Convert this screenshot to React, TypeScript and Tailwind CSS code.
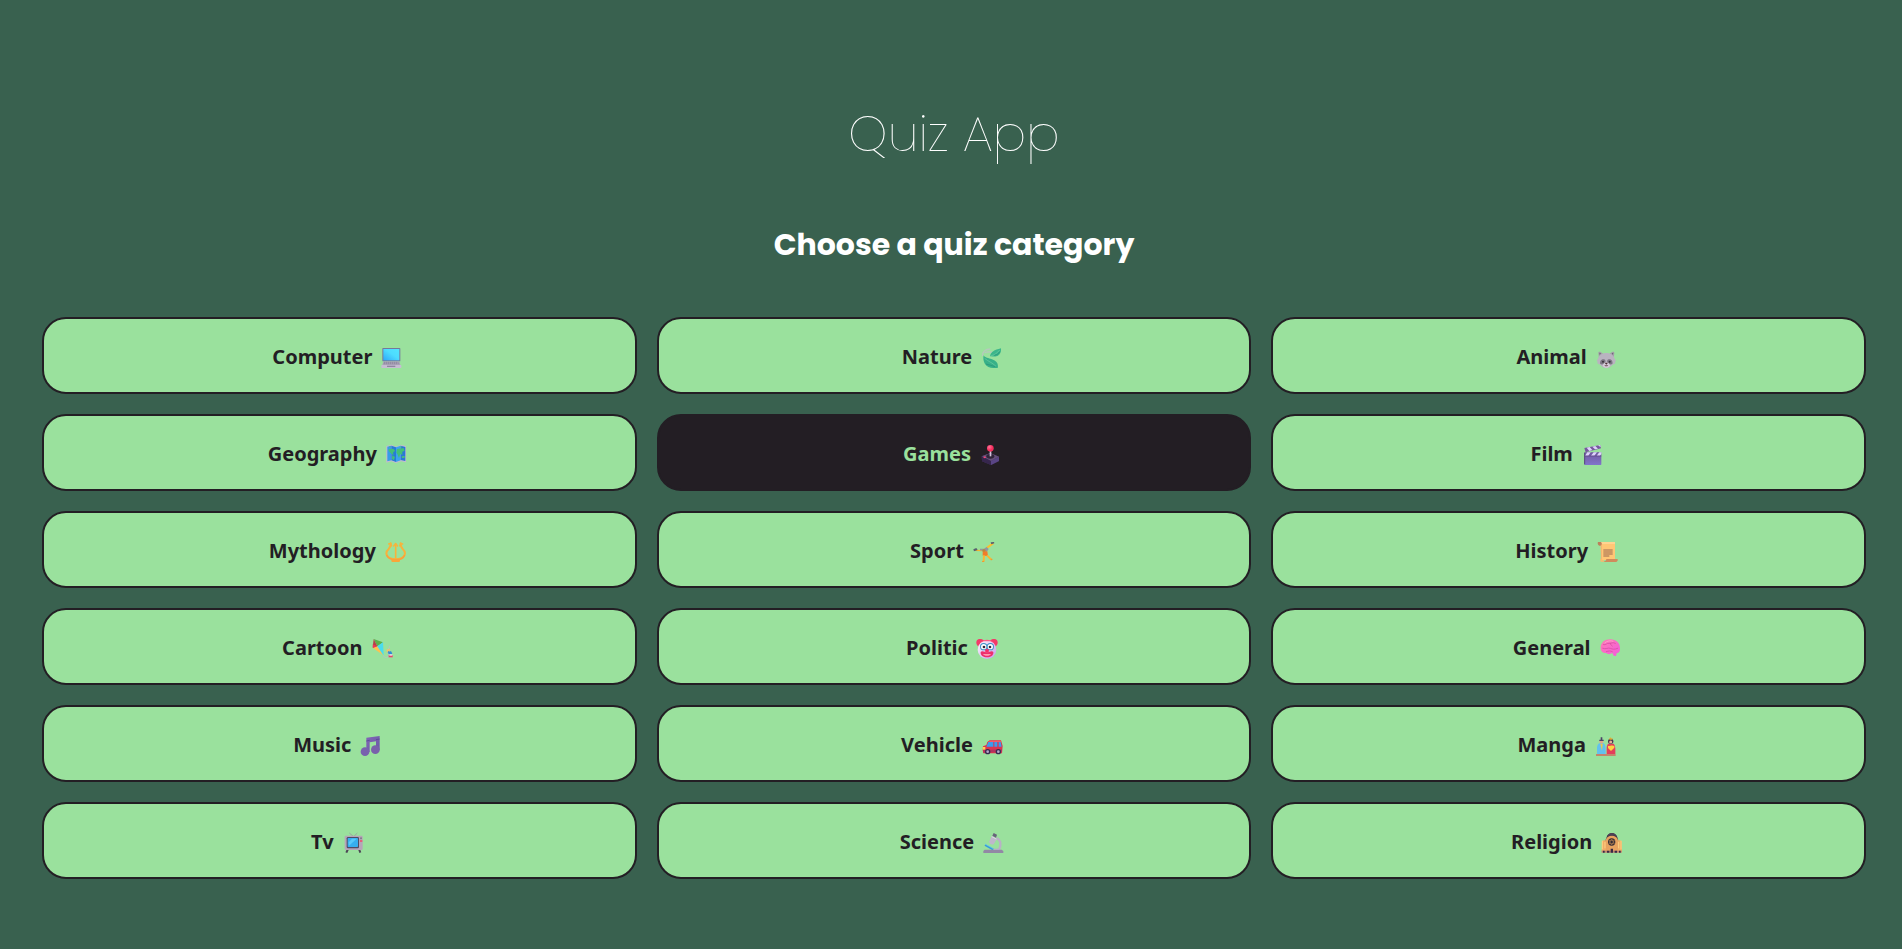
import type { ReactNode } from "react";

type Category = { name: string; icon: ReactNode };

const categories: Category[] = [
  {
    name: "Computer",
    icon: (
      <>
        <defs>
          <linearGradient id="computer-screen" x1="0" y1="1" x2="1" y2="0">
            <stop offset="0" stopColor="#2fa8f8" />
            <stop offset=".55" stopColor="#4ddcff" />
            <stop offset="1" stopColor="#52e4ff" />
          </linearGradient>
        </defs>
        <rect x="3" y="0" width="54" height="40" rx="2" fill="#75799b" />
        <rect x="6" y="3" width="48" height="34" fill="url(#computer-screen)" />
        <path d="M6 40h48l3 11H3z" fill="#aaa3b8" />
        <path d="M8 43h43M7 47h45" stroke="#827b94" strokeWidth="2" strokeDasharray="4 2" />
        <rect x="0" y="51" width="60" height="9" rx="2" fill="#c6bcd2" />
        <rect x="17" y="53" width="25" height="4" fill="#8e869f" />
      </>
    ),
  },
  {
    name: "Nature",
    icon: (
      <>
        <path d="M4 24C2 12 12 3 27 3M10 14c10-4 18-3 25 0" fill="none" stroke="#b6c9bc" strokeWidth="4" />
        <path d="M7 22c4 8 14 8 25 12 15 5 20 14 17 26-16 1-31-1-38-12C6 40 5 30 7 22z" fill="#37b088" />
        <path d="M26 25c2-13 13-19 33-24 1 13-4 22-14 24-7 2-13-1-19 0z" fill="#3bb68b" />
        <path d="M10 31c10 9 22 12 34 24M28 24c13-4 20-9 27-18" fill="none" stroke="#6fcba1" strokeWidth="2" />
        <path d="M14 48c10 4 18 4 28 8M39 22c9-2 13-5 16-11" fill="none" stroke="#2b9a7e" strokeWidth="3" />
      </>
    ),
  },
  {
    name: "Animal",
    icon: (
      <>
        <path d="M6 16C5 11 9 10 13 12l8 6h18l8-6c4-2 8-1 7 4l-2 14H8z" fill="#a59fab" />
        <path d="M9 14l5 2-4 5zM51 14l-5 2 4 5z" fill="#6b6673" />
        <path d="M30 15c13 0 22 7 25 17l4 6-3 3 1 5-9 5c-5 6-11 9-18 9s-13-3-18-9l-9-5 1-5-3-3 4-6c3-10 12-17 25-17z" fill="#b9b3c0" />
        <path d="M26 35C17 30 9 38 12 48c6 4 13-1 16-8zM34 35c9-5 17 3 14 13-6 4-13-1-16-8z" fill="#7c7683" />
        <path d="M19 53c3-8 6-10 11-10s8 2 11 10c-6 8-16 8-22 0z" fill="#d5cdd9" />
        <path d="M25 44h10l-5 6z" fill="#4b2d33" />
        <path d="M24 52h12l-3 3h-6z" fill="#6b4650" />
        <circle cx="20" cy="41" r="3" fill="#38333c" />
        <circle cx="40" cy="41" r="3" fill="#38333c" />
      </>
    ),
  },
  {
    name: "Geography",
    icon: (
      <>
        <path d="M0 3l15-3 14 5L44 0l15 3v49l-15-3-15 5-14-5-15 4z" fill="#c4b9d1" />
        <path d="M3 5l12-3v44L3 49z" fill="#369be8" />
        <path d="M15 2l14 5v44l-14-5z" fill="#277bd6" />
        <path d="M29 7l14-5v44l-14 5z" fill="#3aa3ef" />
        <path d="M43 2l14 4v42l-14-3z" fill="#2978d6" />
        <path d="M7 12l14-1 5 6-6 6 2 8-7-5-8-8zM18 31l8 5-4 10-5-5zM32 12l20-3 3 8-7 3v10l-6-4-4 13-5-12-3-4z" fill="#42bf78" />
        <path d="M46 34l9-1v5l-8 1zM8 4l5-1-3 5zM37 7l10-3v3z" fill="#4cc476" />
      </>
    ),
  },
  {
    name: "Games",
    icon: (
      <>
        <defs>
          <radialGradient id="joystick-ball" cx=".35" cy=".3">
            <stop stopColor="#ff7198" />
            <stop offset="1" stopColor="#f52c5b" />
          </radialGradient>
        </defs>
        <path d="M4 34l26-10 26 11v13L32 60 5 49z" fill="#483161" />
        <path d="M4 34l26-10 26 11-24 13z" fill="#655079" />
        <path d="M4 34l28 14v12L5 49z" fill="#36264d" />
        <path d="M32 48l24-13v13L32 60z" fill="#594585" />
        <ellipse cx="30" cy="34" rx="12" ry="7" fill="#302439" />
        <path d="M28 16h5v18h-5z" fill="#d3c4dc" />
        <circle cx="30" cy="10" r="10" fill="url(#joystick-ball)" />
        <ellipse cx="13" cy="37" rx="4" ry="2.5" fill="#f84476" />
      </>
    ),
  },
  {
    name: "Film",
    icon: (
      <>
        <defs>
          <linearGradient id="clapper" x2="0" y2="1">
            <stop stopColor="#7158a0" />
            <stop offset="1" stopColor="#8175cb" />
          </linearGradient>
        </defs>
        <path d="M6 9L54 0l2 10L10 22z" fill="#76589e" />
        <path d="M13 8l9-2 8 9-9 3zM30 5l9-2 8 8-9 2zM47 1l7-1 1 7z" fill="#ded4fb" />
        <rect x="6" y="22" width="51" height="38" rx="2" fill="url(#clapper)" />
        <path d="M15 22h10l-7 10H8zM34 22h10l-8 10H26zM51 22h6v5l-4 5H43z" fill="#ded4fb" />
        <path d="M7 33h50" stroke="#5a437e" strokeWidth="2" />
        <path d="M7 23v35" stroke="#57487d" strokeWidth="3" />
      </>
    ),
  },
  {
    name: "Mythology",
    icon: (
      <>
        <g fill="none" stroke="#f7b33c" strokeWidth="6" strokeLinecap="round" strokeLinejoin="round">
          <path d="M16 4c0 7-1 12-6 17C-4 34 5 52 31 52c26 0 35-18 21-31-5-5-6-10-6-17" />
          <path d="M31 6v44" strokeWidth="5" />
          <path d="M25 12l6-8 6 8M10 6l6-2 3 8M52 6l-6-2-3 8" strokeWidth="4" />
        </g>
        <path d="M4 39c5 18 48 20 54 0" fill="none" stroke="#fa9f3e" strokeWidth="4" />
        <path d="M18 54h26v4l-4 3H22l-4-3z" fill="#f9a63a" />
      </>
    ),
  },
  {
    name: "Sport",
    icon: (
      <>
        <path d="M7 25l24 1" fill="none" stroke="#f6b52e" strokeWidth="4" strokeLinecap="round" />
        <path d="M40 18L58 5" fill="none" stroke="#fcbf2d" strokeWidth="6" strokeLinecap="round" />
        <path d="M20 20l12 0 8-5 6 6-6 9-20-5z" fill="#9297a0" />
        <path d="M0 22l9-4 4 6-11 4zM52 1l10-1 1 4-9 3z" fill="#59606f" />
        <circle cx="32" cy="26" r="5" fill="#b98a3a" />
        <path d="M28 29l14-1 2 14-16-1z" fill="#f27c29" />
        <path d="M32 40l-1 17M41 40l12 12" fill="none" stroke="#fab831" strokeWidth="6" />
        <path d="M26 59h7M52 54l5-3" stroke="#f09b31" strokeWidth="4" />
      </>
    ),
  },
  {
    name: "History",
    icon: (
      <>
        <path d="M9 0h44v54H12z" fill="#ffc675" />
        <path d="M9 0h44v6H14z" fill="#ffd391" />
        <path d="M2 0h9c4 5 3 10-1 11H6C1 9 0 3 2 0z" fill="#bc805b" />
        <path d="M12 8v47" stroke="#f5b070" strokeWidth="3" />
        <path d="M18 24h28M18 30h28M18 36h28M18 42h18" stroke="#9c6953" strokeWidth="3" />
        <path d="M27 51h34v5l-4 4H15c8-1 12-4 12-9z" fill="#d08b5c" />
        <path d="M12 50v7h8" fill="none" stroke="#fdb76b" strokeWidth="5" />
      </>
    ),
  },
  {
    name: "Cartoon",
    icon: (
      <>
        <path d="M4 0L32 10 15 22z" fill="#5cb04c" />
        <path d="M4 0l11 22L1 26z" fill="#b54048" />
        <path d="M1 26l14-4 18 27z" fill="#ffc14f" />
        <path d="M1 16l14 6-13 5z" fill="#ee3556" />
        <path d="M32 10l2 40-19-28z" fill="#4bdcec" />
        <path d="M33 49c2 8 12 9 15 3s-4-12-2-18 7-8 5-14" fill="none" stroke="#b4c6c4" strokeWidth="3" />
        <path d="M43 32l9 6M52 30l-7 9" stroke="#f0c36b" strokeWidth="4" />
        <path d="M47 38l12 6M57 38l-8 7" stroke="#2f8bd6" strokeWidth="5" />
        <path d="M49 48h12v7H49z" fill="#e24b68" />
        <path d="M51 46h9v4h-9z" fill="#ece9f1" />
      </>
    ),
  },
  {
    name: "Politic",
    icon: (
      <>
        <defs>
          <linearGradient id="clown-face" x2="1" y2="1">
            <stop stopColor="#fffaff" />
            <stop offset="1" stopColor="#c598e9" />
          </linearGradient>
        </defs>
        <path d="M-2 5C1-2 15-1 21 5L8 25C-2 22-5 12-2 5zM60 5C57-2 43-1 37 5l13 20c10-3 13-13 10-20z" fill="#f33a69" />
        <circle cx="29" cy="32" r="28" fill="url(#clown-face)" />
        <path d="M11 10C17 0 41 0 47 10l-8-3H19z" fill="#fb5c85" />
        <circle cx="19" cy="23" r="11" fill="#3a8fc6" />
        <circle cx="39" cy="23" r="11" fill="#3a8fc6" />
        <circle cx="19" cy="23" r="8" fill="#fff" />
        <circle cx="39" cy="23" r="8" fill="#fff" />
        <circle cx="20" cy="24" r="4" fill="#362539" />
        <circle cx="38" cy="24" r="4" fill="#362539" />
        <path d="M10 39c4-6 13 1 19 1s15-7 19-1c3 21-41 21-38 0z" fill="#ed2f6c" />
        <path d="M17 45h24c-3 7-21 7-24 0z" fill="#ff9aae" />
        <circle cx="29" cy="35" r="6" fill="#f62f67" />
      </>
    ),
  },
  {
    name: "General",
    icon: (
      <>
        <defs>
          <linearGradient id="brain" x2="1" y2="1">
            <stop stopColor="#ff7bb4" />
            <stop offset="1" stopColor="#f25add" />
          </linearGradient>
        </defs>
        <path d="M1 28C0 11 13 1 30 1c17 0 29 11 29 27 1 8-3 14-10 15l-2 8-7-1-4-8c-6 4-14 5-19 0C8 43 1 38 1 28z" fill="url(#brain)" />
        <path d="M9 17c9 2 9-5 17-4s10-5 19 0M7 28c10 4 16-3 23 0s12 4 22 0M18 38c7-2 11-4 18 0M30 13c0 5 4 6 6 8" fill="none" stroke="#d94fa6" strokeWidth="2.5" strokeLinecap="round" />
        <path d="M13 12c8-7 18-8 26-5" fill="none" stroke="#ff9bcb" strokeWidth="3" />
      </>
    ),
  },
  {
    name: "Music",
    icon: (
      <>
        <defs>
          <linearGradient id="music-note" x2="1" y2="1">
            <stop stopColor="#8265b6" />
            <stop offset="1" stopColor="#6859a5" />
          </linearGradient>
        </defs>
        <path d="M18 5L58 0v43H47V16l-19 3v29H18z" fill="url(#music-note)" />
        <circle cx="14" cy="47" r="13" fill="#7862ae" />
        <circle cx="45" cy="41" r="13" fill="#7960ab" />
        <path d="M18 15l10-2M47 11l11-2" stroke="#5c4c9a" strokeWidth="3" />
      </>
    ),
  },
  {
    name: "Vehicle",
    icon: (
      <>
        <path d="M15 18l7-5h34l5 17-2 22H3l-2-9 1-12 10-4z" fill="#dc344f" />
        <path d="M18 18h15v14H12zM36 18h9v14h-9zM49 18h6l3 14h-9z" fill="#3b9ced" />
        <path d="M22 14h32l3 4H20z" fill="#f85868" />
        <path d="M1 33h8v8H1z" fill="#ffd251" />
        <path d="M3 42l56-2v7L3 50z" fill="#b2325f" />
        <circle cx="16" cy="47" r="8" fill="#372a50" />
        <circle cx="48" cy="47" r="8" fill="#372a50" />
        <circle cx="16" cy="47" r="4" fill="#b4a6c9" />
        <circle cx="48" cy="47" r="4" fill="#b4a6c9" />
      </>
    ),
  },
  {
    name: "Manga",
    icon: (
      <>
        <rect x="2" y="54" width="59" height="6" rx="1" fill="#c5846b" />
        <path d="M12 22h13c5 4 6 10 6 16v16H5V36c0-6 2-11 7-14z" fill="#62c1ee" />
        <path d="M38 23h17c4 5 5 11 5 17v14H34V40c0-6 0-12 4-17z" fill="#e33e5b" />
        <path d="M15 24h7l-2 20z" fill="#f2c549" />
        <path d="M38 30c8 0 13-4 19 0v5L47 45l-9-9z" fill="#ffd340" />
        <circle cx="18" cy="17" r="6" fill="#dfa78b" />
        <path d="M16 4h5v7h4v4H12v-4h4z" fill="#4a4166" />
        <circle cx="46" cy="16" r="8" fill="#4b344d" />
        <circle cx="46" cy="18" r="4.5" fill="#e6b296" />
        <path d="M41 5l3 3 2-5 3 5 4-2-3 5h-8z" fill="#e9a92a" />
      </>
    ),
  },
  {
    name: "Tv",
    icon: (
      <>
        <path d="M18 0l13 11L42 0" fill="none" stroke="#99a79f" strokeWidth="3" />
        <path d="M14 48l-5 11M47 48l4 11" stroke="#4d4656" strokeWidth="6" />
        <rect x="4" y="8" width="54" height="43" rx="4" fill="#b6a5b8" />
        <rect x="10" y="12" width="37" height="34" rx="4" fill="#504b65" />
        <rect x="13" y="15" width="31" height="27" rx="2" fill="#37aeef" />
        <path d="M16 28l10-11h14L17 38z" fill="#57c8fa" />
        <circle cx="53" cy="16" r="3" fill="#82798b" />
        <path d="M50 24h7" stroke="#ef5270" strokeWidth="5" />
      </>
    ),
  },
  {
    name: "Science",
    icon: (
      <>
        <path d="M40 15c12 6 14 20 7 36" fill="none" stroke="#b9b1c6" strokeWidth="7" />
        <path d="M25 10l16 7-10 17c-8 3-15-3-13-9z" fill="#bfb7cb" />
        <path d="M31 0l10 5-3 9-11-6z" fill="#67637a" />
        <path d="M25 11l14 7" stroke="#dcd5e4" strokeWidth="3" />
        <path d="M5 36l25 14" stroke="#389bd9" strokeWidth="6" />
        <path d="M5 33l25 14" stroke="#65ceed" strokeWidth="2" />
        <path d="M4 50h51l5 4v6H0v-6z" fill="#9288a5" />
        <path d="M31 49h17" stroke="#b5abc6" strokeWidth="4" />
      </>
    ),
  },
  {
    name: "Religion",
    icon: (
      <>
        <path d="M15 15C19-5 44-5 49 15l2 8H12z" fill="#403649" />
        <path d="M2 24l8-3 6 4v33H1zM61 24l-8-3-6 4v33h15z" fill="#f0ae67" />
        <path d="M13 23c2-20 35-20 37 0v35H13z" fill="#e8a360" />
        <path d="M17 9c7-12 23-12 29 0-8-3-20-3-29 0z" fill="#4d4256" />
        <circle cx="31" cy="27" r="11" fill="#342b34" />
        <path d="M31 18l8 14H23zM31 36l-8-14h16z" fill="none" stroke="#c89059" strokeWidth="1.5" />
        <path d="M3 23v26M59 23v26M11 27v19M52 27v19" stroke="#ffd282" strokeWidth="3" />
        <path d="M1 53h60v6H1z" fill="#b68172" />
        <path d="M5 59v-6h5v6M17 59v-6h7v6M28 59V47h7v12M40 59v-6h7v6M53 59v-6h5v6" fill="#392a45" />
      </>
    ),
  },
];

const selected = "Games";

function CategoryCard({ name, icon }: Category) {
  const active = name === selected;
  return (
    <button
      type="button"
      aria-pressed={active}
      className={
        "flex h-[77px] cursor-pointer items-center justify-center gap-2 rounded-3xl border-2 border-[#231e24] pt-0.5 text-xl font-bold " +
        (active ? "bg-[#231e24] text-[#9ae19d]" : "bg-[#9ae19d] text-[#231e24]")
      }
    >
      <span>{name}</span>
      <svg viewBox="-4 -9 78 69" className="h-[23px] w-[26px]" aria-hidden="true">
        {icon}
      </svg>
    </button>
  );
}

export default function App() {
  return (
    <main className="min-h-screen bg-[#39614f] pt-24 pr-9 pb-16 pl-[42px] font-['Noto_Sans','Open_Sans',sans-serif]">
      <h1 className="text-center font-['Poppins','Lato',sans-serif] text-[50px] leading-[75px] font-thin text-white">
        Quiz App
      </h1>
      <h2 className="mt-[50px] text-center font-['Poppins','Inter',sans-serif] text-3xl leading-[48px] font-bold text-white">
        Choose a quiz category
      </h2>
      <div className="mt-12 grid grid-cols-3 gap-5">
        {categories.map((category) => (
          <CategoryCard key={category.name} {...category} />
        ))}
      </div>
    </main>
  );
}
